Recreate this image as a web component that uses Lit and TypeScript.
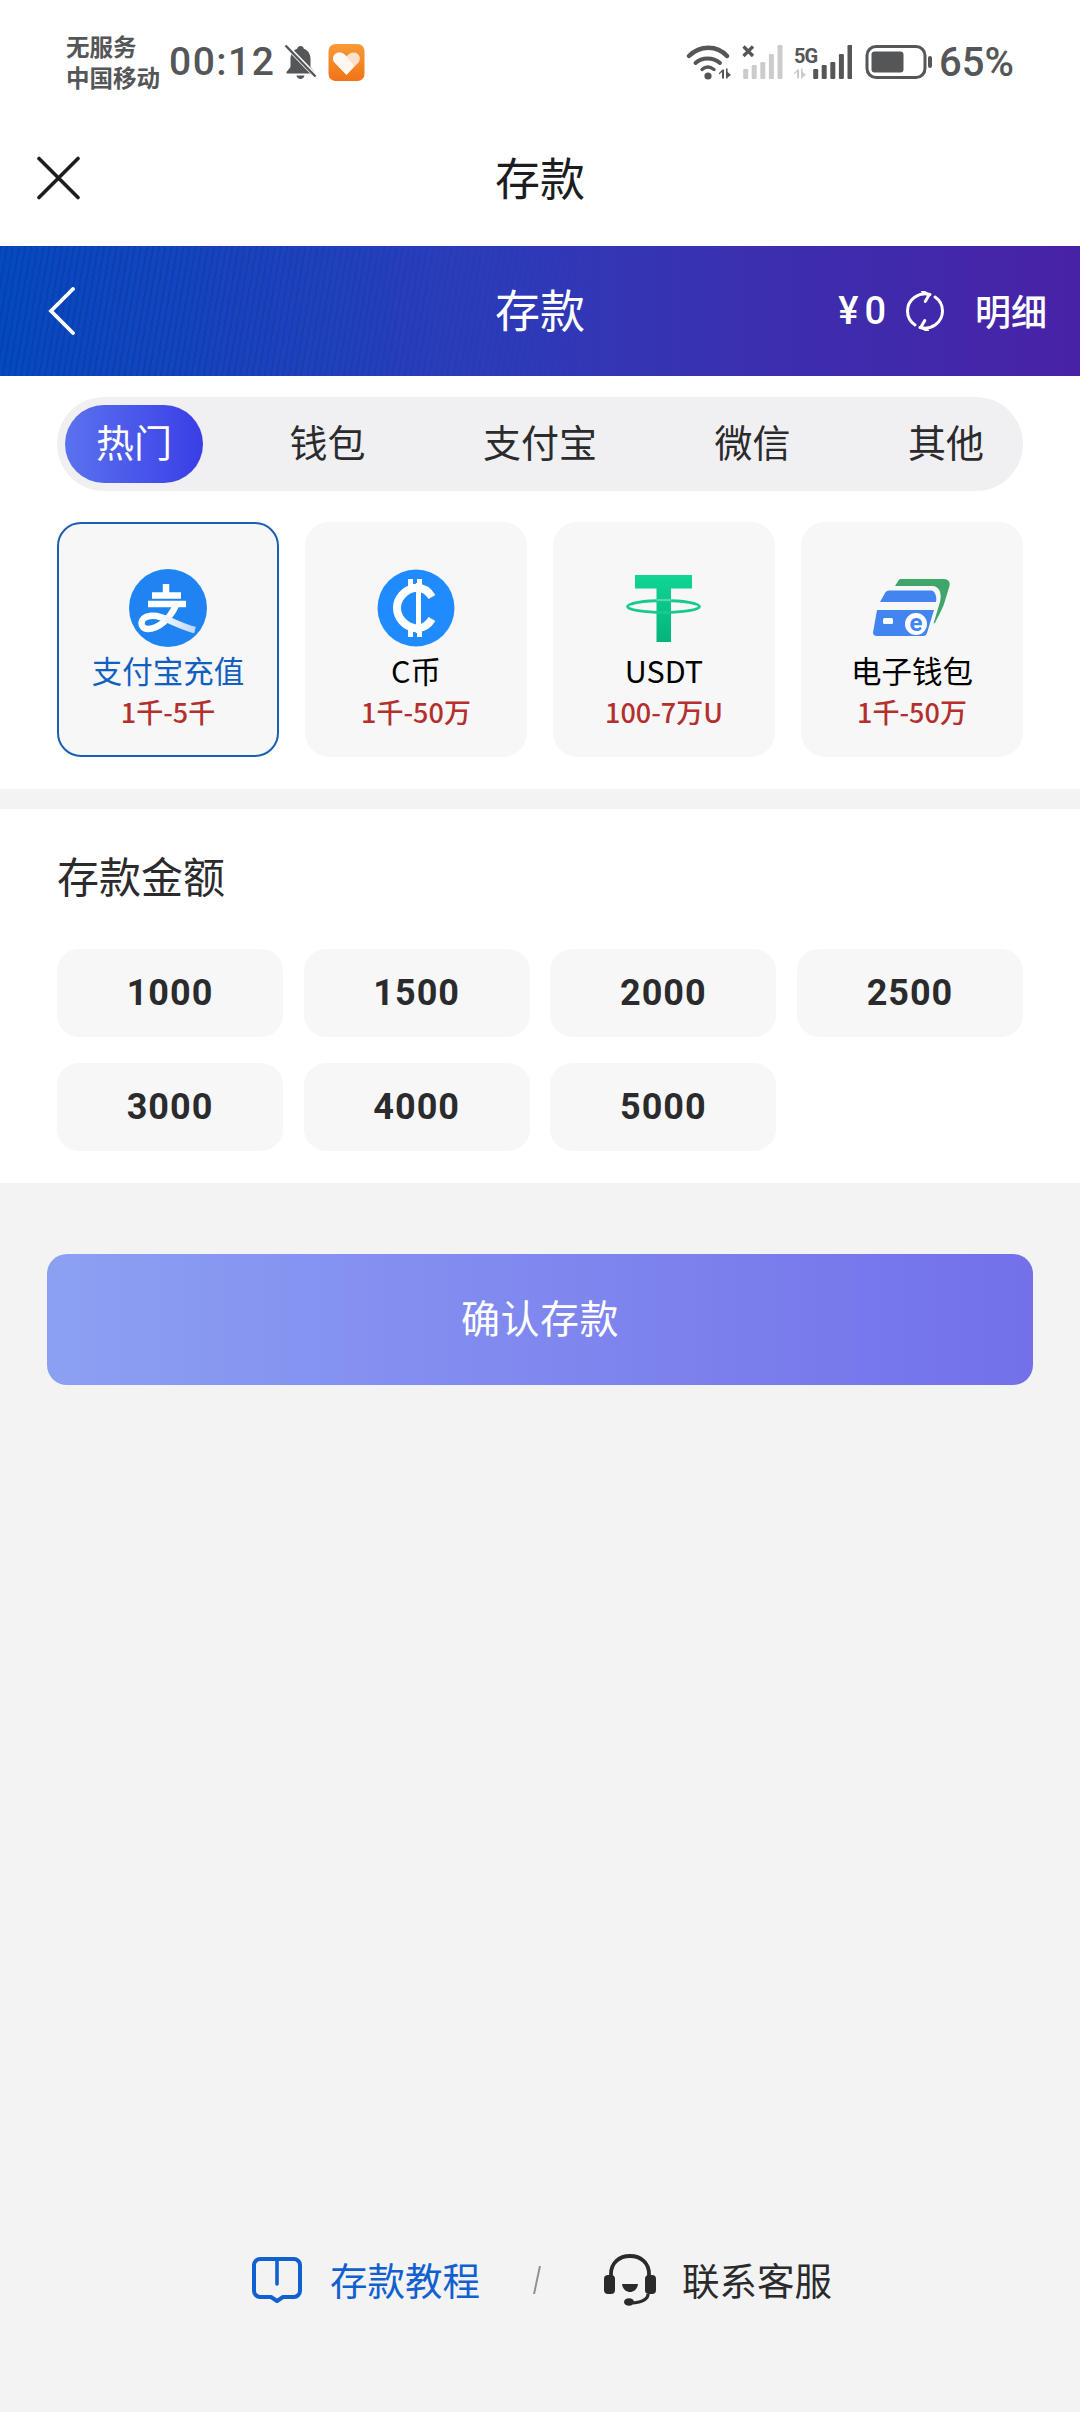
import { LitElement, css, html, svg } from 'lit';
import { customElement, state } from 'lit/decorators.js';
import { classMap } from 'lit/directives/class-map.js';

const GREY = '#555658';

const bellIcon = html`<svg class="bell" width="33" height="37" viewBox="0 0 32 37">
  <path fill=${GREY} d="M16 2c2 0 3 1.300 3.400 2.800C24 6.500 26 10.500 26 15v8l4 5v1.500H2V28l4-5v-8c0-4.500 2-8.500 6.600-10.200C13 3.300 14 2 16 2z" />
  <path fill=${GREY} d="M12 31.500h8c-.4 2.200-2 3.500-4 3.500s-3.600-1.300-4-3.500z" />
  <path stroke="#fff" stroke-width="4.500" d="M1 1l32 33" />
  <path stroke=${GREY} stroke-width="2.400" d="M1 1.500l30 31" />
</svg>`;

const appIcon = html`<svg width="37" height="37" viewBox="0 0 36 37">
  <defs>
    <linearGradient id="app-bg" x1="0" y1="0" x2="0" y2="1">
      <stop offset="0" stop-color="#f79a35" />
      <stop offset="1" stop-color="#f17417" />
    </linearGradient>
  </defs>
  <rect width="36" height="37" rx="7" fill="url(#app-bg)" />
  <path fill="#fbe0cb" d="M18 31L6 18.500C2.800 14.800 5.200 8.500 11 8.500c3 0 5.500 1.700 7 4 1.500-2.300 4-4 7-4 5.800 0 8.200 6.300 5 10z" />
  <path fill="#fff" d="M11 8.500c3 0 5.500 1.700 7 4l6 7.500c1.500 2 .5 4.500-1.500 5.500L18 31 6 18.500C2.800 14.800 5.200 8.500 11 8.500z" opacity=".75" />
</svg>`;

const arrows = (color: string) => svg`
  <path fill=${color} d="M3 10V3.500L0 6V4.500L3.500 1H5v9zM7 0h1.600v3.500L12 6.500 8.600 9V10H7z" />`;

const wifiIcon = html`<svg width="48" height="37" viewBox="0 0 48 37">
  <g fill="none" stroke=${GREY} stroke-linecap="round">
    <path stroke-width="4.400" d="M3 12C14 1 31 1 41 12" />
    <path stroke-width="4" d="M9.500 19C16 13 27 13 34 19" />
    <path stroke-width="3.400" d="M16 25.500C19.500 22.500 24 22.500 28 25.500" />
  </g>
  <circle cx="22" cy="32" r="3.600" fill=${GREY} />
  <g transform="translate(33 24.500)">${arrows(GREY)}</g>
</svg>`;

const barXs = [4.7, 13.2, 21.8, 30.4, 39];
const barHs = [10, 14, 17, 25, 34];

const signalOff = html`<svg width="42" height="37" viewBox="0 0 42 37">
  ${barXs.map(
    (x, i) => svg`<rect x=${x - 2.5} y=${35 - barHs[i]} width="5" height=${barHs[i]} rx="1.200" fill="#cbcbcb" />`,
  )}
  <path stroke=${GREY} stroke-width="3.200" d="M2.500 2.500l9.500 9.500M12 2.500l-9.500 9.500" />
</svg>`;

const signalOn = html`<svg width="58" height="37" viewBox="0 0 58 37">
  <text x="0" y="19" class="five-g" fill=${GREY}>5G</text>
  <g transform="translate(0 24.500)">${arrows('#cbcbcb')}</g>
  ${barXs.map(
    (x, i) => svg`<rect x=${x + 14.500} y=${35 - barHs[i]} width="5" height=${barHs[i]} rx="1.200" fill=${GREY} />`,
  )}
</svg>`;

const batteryIcon = html`<svg width="68" height="37" viewBox="0 0 68 37">
  <rect x="2" y="2.500" width="58" height="31" rx="9" fill="none" stroke=${GREY} stroke-width="3" />
  <rect x="6.500" y="7.500" width="32" height="21" rx="3" fill=${GREY} />
  <rect x="63" y="12" width="4" height="12" rx="2" fill=${GREY} />
</svg>`;

const closeIcon = html`<svg width="44" height="44" viewBox="0 0 44 44">
  <path stroke="#1d1d1f" stroke-width="3.600" stroke-linecap="round" d="M3 2.500l39 39M42 2.500l-39 39" />
</svg>`;

const backIcon = html`<svg width="28" height="48" viewBox="0 0 28 48">
  <path fill="none" stroke="#fff" stroke-width="3.800" stroke-linecap="round" d="M25 2L3 24l22 22" />
</svg>`;

const refreshIcon = html`<svg width="40" height="40" viewBox="0 0 40 40">
  <g fill="none" stroke="#fff" stroke-width="3" stroke-linecap="round" stroke-linejoin="round">
    <path d="M25 3.500C14 .5 2.500 8.500 2.500 20c0 6 3 11 7.500 14" />
    <path d="M15 36.500c11 3 22.500-5 22.500-16.500 0-6-3-11-7.500-14" />
    <path d="M24 11.500V4h-7.500" transform="rotate(30 24 4)" />
    <path d="M16 28.500V36h7.500" transform="rotate(30 16 36)" />
  </g>
</svg>`;

const alipayIcon = html`<svg width="78" height="78" viewBox="0 0 78 78">
  <defs>
    <linearGradient id="ribbon" gradientUnits="userSpaceOnUse" x1="28" y1="0" x2="68" y2="0">
      <stop offset="0" stop-color="#fff" />
      <stop offset="1" stop-color="#b9d4fb" />
    </linearGradient>
  </defs>
  <circle cx="39" cy="39" r="39" fill="#1f83f2" />
  <g fill="none" stroke="#fff" stroke-width="6.500">
    <path d="M37 15v11" />
    <path d="M23 26.500h29" />
    <path d="M19 35h38" />
    <path stroke-linecap="round" d="M47 36C41 50 29 60 19 60 10 60 10 48 21 47" />
    <path stroke="url(#ribbon)" d="M21 47C33 45 46 56 66 61" />
  </g>
</svg>`;

const coinIcon = html`<svg width="78" height="78" viewBox="0 0 78 78">
  <circle cx="39" cy="39" r="38.500" fill="#1f8bff" />
  <path fill="none" stroke="#fff" stroke-width="8" d="M55 28C50 20 43 18 37 19 28 21 20 29 20 39s8 18 17 20c6 1 13-1 18-9" />
  <path fill="#fff" d="M31 10h5v9h-5zM40 10h5v9h-5zM31 59h5v9h-5zM40 59h5v9h-5zM39 14h5v50h-5z" />
</svg>`;

const tetherIcon = html`<svg width="78" height="78" viewBox="0 0 78 78">
  <defs>
    <linearGradient id="usdt" x1="0" y1="0" x2="0" y2="1">
      <stop offset="0" stop-color="#10d594" />
      <stop offset="1" stop-color="#03b57a" />
    </linearGradient>
  </defs>
  <path fill="url(#usdt)" d="M10 6h57v13.500H46V73H31.500V19.500H10z" />
  <ellipse cx="38.500" cy="37.500" rx="36" ry="6" fill="none" stroke="#18c98f" stroke-width="2.800" />
  <path fill="#b8ecd8" d="M31.500 30h14.500v2H31.500z" opacity=".4" />
</svg>`;

const walletIcon = html`<svg width="78" height="78" viewBox="0 0 78 78">
  <g transform="translate(0 10)">
    <path fill="#3fa56b" d="M22 7l3.500-5.500C26 .5 27 0 28 0h43c4 0 6.500 3 5.500 7L71 25c-1 3-3 7-9 19l-1.500.5L67 23c2-8 0-16-8-16z" />
    <path fill="#4285f1" d="M7 23l5-9c1-1.500 2-2.500 4-2.500h42c4 0 6 6 5 11.500z" />
    <path fill="#4285f1" d="M4 31h57l-7 23c-.6 2-2 3-4 3H4c-3 0-4.500-2-3.800-4.500z" />
    <rect x="10" y="39" width="10" height="6" rx="1.500" fill="#fff" />
    <circle cx="43" cy="45" r="11" fill="#fff" />
    <text x="43" y="52" text-anchor="middle" class="wallet-e">e</text>
  </g>
</svg>`;

const bookIcon = html`<svg width="50" height="46" viewBox="0 0 50 46">
  <path fill="none" stroke="#1160d0" stroke-width="4" stroke-linejoin="round" d="M8 2h34c3 0 6 2.500 6 6v26c0 3.500-3 6-6 6H31l-6 4-6-4H8c-3 0-6-2.500-6-6V8c0-3.500 3-6 6-6z" />
  <path stroke="#1160d0" stroke-width="3.600" stroke-linecap="round" d="M25 3v24" />
</svg>`;

const headsetIcon = html`<svg width="52" height="52" viewBox="0 0 52 52">
  <path fill="none" stroke="#2a2a2c" stroke-width="3.800" d="M7 24V20C7 9 15 2 26 2s19 7 19 18v4" />
  <rect x="0" y="21" width="11" height="19" rx="4" fill="#2a2a2c" />
  <rect x="41" y="21" width="11" height="19" rx="4" fill="#2a2a2c" />
  <path fill="#2a2a2c" d="M18 30h16c-.6 5-4 8-8 8s-7.400-3-8-8z" />
  <path fill="none" stroke="#2a2a2c" stroke-width="3.200" d="M44 40c0 5-6 8-15 9" />
  <ellipse cx="25" cy="48" rx="5" ry="3.800" fill="#2a2a2c" />
</svg>`;

const TABS = ['热门', '钱包', '支付宝', '微信', '其他'];

const METHODS = [
  { name: '支付宝充值', range: '1千-5千', icon: alipayIcon },
  { name: 'C币', range: '1千-50万', icon: coinIcon },
  { name: 'USDT', range: '100-7万U', icon: tetherIcon },
  { name: '电子钱包', range: '1千-50万', icon: walletIcon },
];

const AMOUNTS = [1000, 1500, 2000, 2500, 3000, 4000, 5000];

@customElement('app-root')
export class AppRoot extends LitElement {
  @state()
  activeTab = 0;

  @state()
  activeMethod = 0;

  static styles = css`
    :host {
      display: flex;
      flex-direction: column;
      min-height: 2412px;
      background: #f3f3f4;
      font-family: 'Noto Sans CJK SC', 'Noto Sans', sans-serif;
      color: #1d1d1f;
    }

    .top {
      background: #fff;
    }

    .status {
      display: flex;
      align-items: center;
      height: 124px;
      padding: 0 66px;
      color: #555658;
    }

    .carrier {
      display: flex;
      flex-direction: column;
      font-size: 23.5px;
      line-height: 31px;
      font-weight: 700;
      width: 103px;
    }

    .time {
      font-family: Roboto, sans-serif;
      font-size: 39px;
      font-weight: 500;
      letter-spacing: 1.5px;
      width: 115px;
    }

    .bell {
      margin-right: 11px;
    }

    .status-right {
      display: flex;
      align-items: center;
      margin-left: auto;
    }

    .status-right svg:nth-child(1) {
      margin-right: 7px;
    }

    .status-right svg:nth-child(2) {
      margin-right: 11px;
    }

    .status-right svg:nth-child(3) {
      margin-right: 13px;
    }

    .status-right svg:nth-child(4) {
      margin-right: 6px;
    }

    .percent {
      font-family: Roboto, sans-serif;
      font-size: 40px;
      font-weight: 500;
    }

    .five-g {
      font-family: Roboto, sans-serif;
      font-size: 20px;
      font-weight: 700;
      letter-spacing: -1px;
    }

    .wallet-e {
      font-family: Roboto, sans-serif;
      font-size: 24px;
      font-weight: 700;
      fill: #4285f1;
    }

    .nav {
      display: grid;
      grid-template-columns: 1fr auto 1fr;
      align-items: center;
      height: 108px;
      padding: 0 36px;
      margin-bottom: 14px;
    }

    .nav-title {
      font-size: 45px;
      line-height: 60px;
      padding-bottom: 3px;
    }

    .banner {
      position: relative;
      display: grid;
      grid-template-columns: 1fr auto 1fr;
      align-items: center;
      height: 130px;
      padding: 0 33px;
      color: #fff;
      background: linear-gradient(90deg, #0549bf 0%, #2a3dbb 42%, #3a30b0 68%, #4822a6 100%);
      overflow: hidden;
    }

    .banner::before {
      content: '';
      position: absolute;
      inset: 0 45% 0 0;
      background: repeating-linear-gradient(100deg, rgba(0, 20, 90, 0.12) 0 2px, transparent 2px 6px);
      -webkit-mask-image: linear-gradient(90deg, #000 30%, transparent 100%);
      mask-image: linear-gradient(90deg, #000 30%, transparent 100%);
    }

    .banner::after {
      content: '';
      position: absolute;
      inset: 0;
      background: linear-gradient(90deg, rgba(255, 255, 255, 0.1), transparent 30%);
      clip-path: polygon(56% 100%, 60.5% 0, 100% 0, 100% 100%);
    }

    .banner > * {
      position: relative;
      z-index: 1;
    }

    .back {
      display: flex;
      margin-left: 15px;
    }

    .banner-title {
      font-size: 45px;
      line-height: 60px;
      padding-bottom: 4px;
    }

    .balance {
      display: flex;
      align-items: center;
      justify-content: flex-end;
    }

    .money {
      font-family: Roboto, sans-serif;
      font-size: 38px;
      font-weight: 500;
      letter-spacing: 6px;
      margin-right: 13px;
    }

    .detail {
      font-size: 36px;
      font-weight: 500;
      margin-left: 30px;
      padding-bottom: 3px;
    }

    .methods {
      background: #fff;
      padding: 21px 57px 32px;
      margin-bottom: 20px;
    }

    .tabs {
      display: flex;
      justify-content: space-between;
      height: 94px;
      padding: 8px;
      box-sizing: border-box;
      background: #f0eff1;
      border-radius: 47px;
    }

    .tab {
      display: flex;
      align-items: center;
      padding: 0 31px 7px;
      border-radius: 39px;
      font-size: 38px;
      color: #2b2b2d;
    }

    .tab.active {
      color: #fff;
      background: linear-gradient(90deg, #5a72ee, #3a3ee6);
    }

    .cards {
      display: grid;
      grid-template-columns: repeat(4, 1fr);
      gap: 26px;
      margin-top: 31px;
    }

    .card {
      display: flex;
      flex-direction: column;
      align-items: center;
      height: 235px;
      padding-top: 46px;
      box-sizing: border-box;
      background: #f7f7f8;
      border: 2px solid transparent;
      border-radius: 24px;
      color: #000;
    }

    .card.active {
      border-color: #1a5fb0;
      color: #1160c0;
    }

    .card svg {
      flex: none;
      margin-top: -1px;
    }

    .card-name {
      margin-top: 2px;
      font-size: 30.5px;
      line-height: 42px;
    }

    .card-range {
      margin-top: 2px;
      font-size: 27px;
      line-height: 38px;
      font-weight: 500;
      color: #b4302f;
    }

    .amounts {
      background: #fff;
      padding: 36px 57px 32px;
    }

    .amounts-title {
      font-size: 42px;
      line-height: 60px;
      margin: 0 0 44px;
      font-weight: 400;
      color: #2b2b2d;
    }

    .amount-grid {
      display: grid;
      grid-template-columns: repeat(4, 1fr);
      column-gap: 20.6px;
      row-gap: 26px;
    }

    .amount {
      display: flex;
      align-items: center;
      justify-content: center;
      height: 88px;
      background: #f7f7f8;
      border-radius: 22px;
      font-family: Roboto, sans-serif;
      font-size: 36px;
      font-weight: 700;
      letter-spacing: 1px;
      color: #2b2b2d;
    }

    .submit {
      display: flex;
      align-items: center;
      justify-content: center;
      height: 131px;
      padding-bottom: 7px;
      box-sizing: border-box;
      margin: 71px 47px 0;
      background: linear-gradient(90deg, #8ca0f3, #7370ea);
      border-radius: 20px;
      color: #fff;
      font-size: 39px;
      letter-spacing: 0.5px;
    }

    .footer {
      display: flex;
      align-items: center;
      margin-top: auto;
      height: 60px;
      margin-bottom: 102px;
      padding-left: 252px;
      font-size: 37.5px;
    }

    .link-blue {
      margin-left: 28px;
      padding-bottom: 4px;
      color: #1160d0;
    }

    .slash {
      width: 6px;
      height: 28px;
      margin: 0 64px 0 54px;
      background: linear-gradient(#909090, #909090) center / 2px 100% no-repeat;
      transform: skewX(-12deg);
    }

    .link-dark {
      margin-left: 26px;
      padding-bottom: 4px;
      color: #2b2b2d;
    }
  `;

  render() {
    return html`
      <div class="top">
        <div class="status">
          <div class="carrier"><span>无服务</span><span>中国移动</span></div>
          <span class="time">00:12</span>
          ${bellIcon} ${appIcon}
          <div class="status-right">
            ${wifiIcon} ${signalOff} ${signalOn} ${batteryIcon}
            <span class="percent">65%</span>
          </div>
        </div>
        <div class="nav">
          ${closeIcon}
          <span class="nav-title">存款</span>
        </div>
      </div>

      <div class="banner">
        <span class="back">${backIcon}</span>
        <span class="banner-title">存款</span>
        <div class="balance">
          <span class="money">¥0</span>
          ${refreshIcon}
          <span class="detail">明细</span>
        </div>
      </div>

      <section class="methods">
        <div class="tabs">
          ${TABS.map(
            (t, i) => html`<div class=${classMap({ tab: true, active: i === this.activeTab })}>${t}</div>`,
          )}
        </div>
        <div class="cards">
          ${METHODS.map(
            (m, i) => html`
              <div class=${classMap({ card: true, active: i === this.activeMethod })}>
                ${m.icon}
                <span class="card-name">${m.name}</span>
                <span class="card-range">${m.range}</span>
              </div>
            `,
          )}
        </div>
      </section>

      <section class="amounts">
        <h2 class="amounts-title">存款金额</h2>
        <div class="amount-grid">
          ${AMOUNTS.map((a) => html`<div class="amount">${a}</div>`)}
        </div>
      </section>

      <div class="submit">确认存款</div>

      <div class="footer">
        ${bookIcon}
        <span class="link-blue">存款教程</span>
        <span class="slash"></span>
        ${headsetIcon}
        <span class="link-dark">联系客服</span>
      </div>
    `;
  }
}

declare global {
  interface HTMLElementTagNameMap {
    'app-root': AppRoot;
  }
}
